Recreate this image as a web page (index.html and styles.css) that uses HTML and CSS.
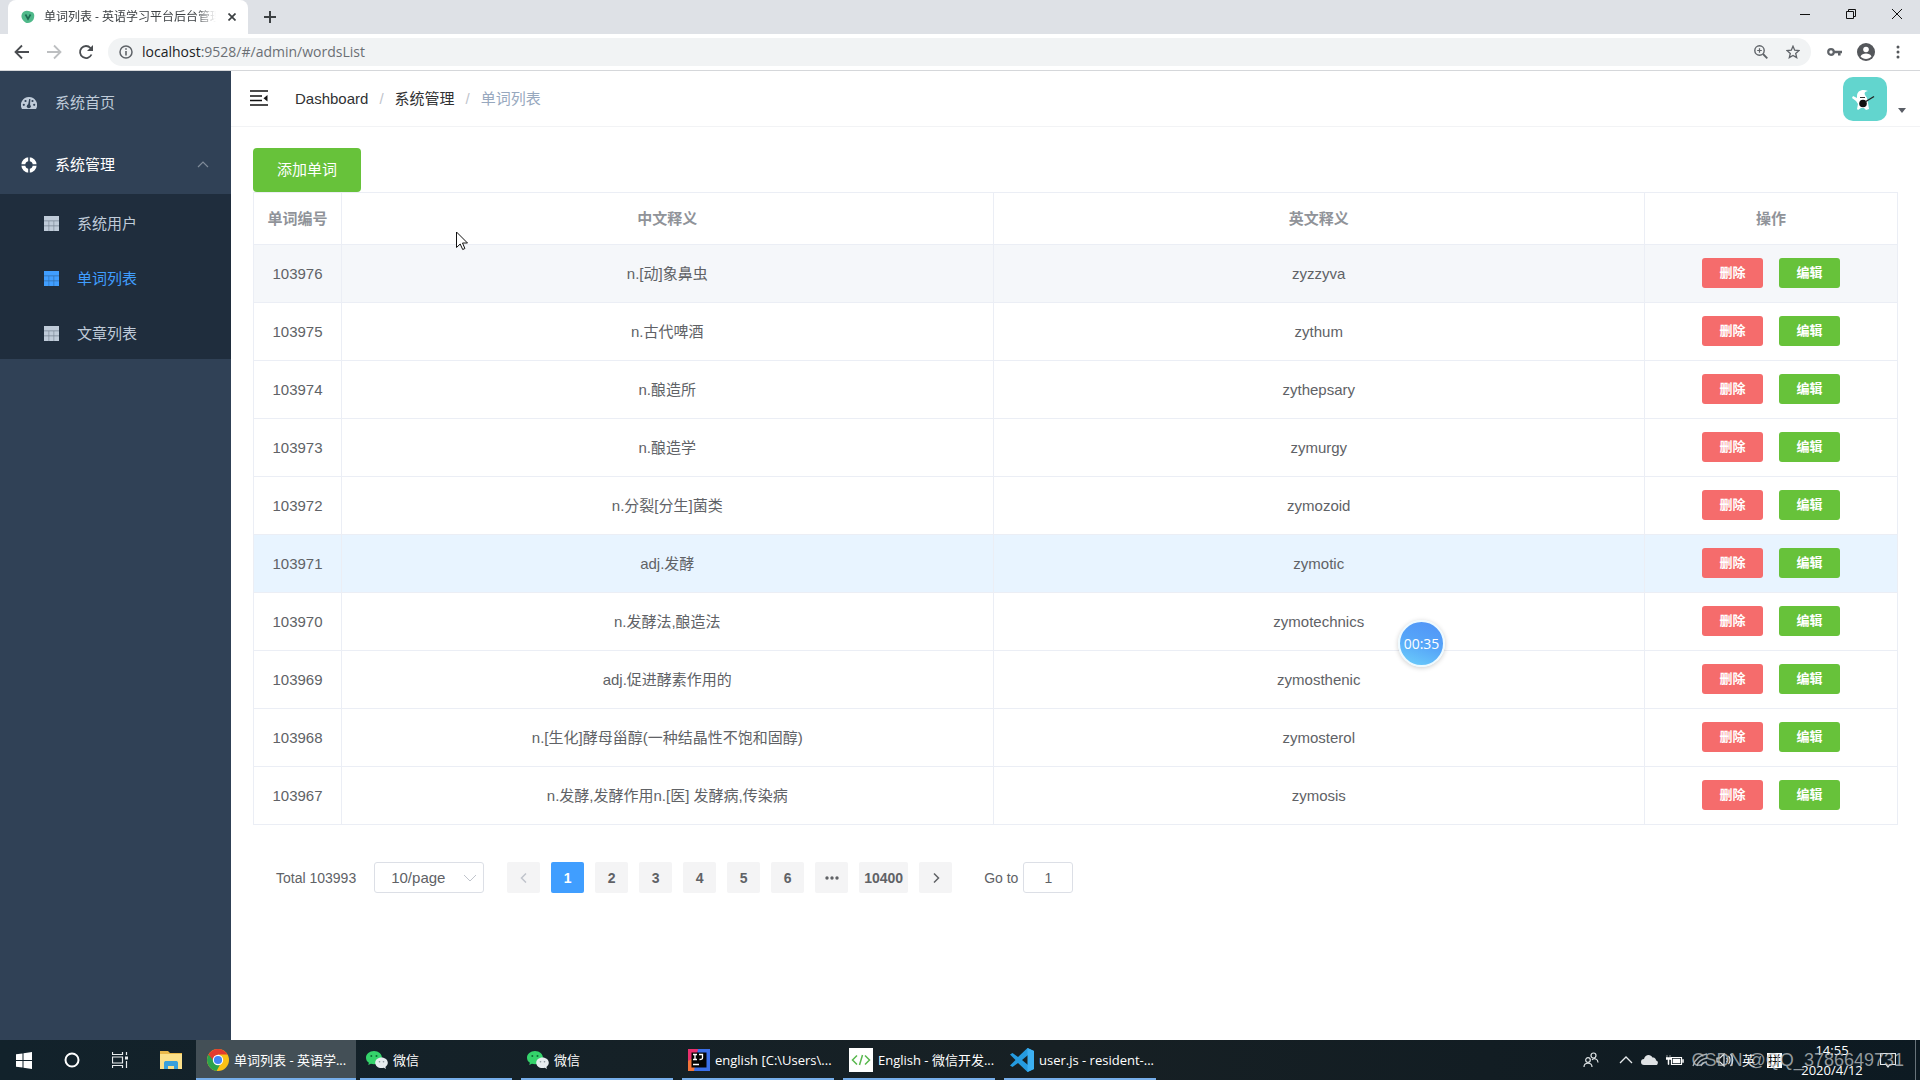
FILE: index.html
```html
<!DOCTYPE html>
<html lang="zh-CN">
<head>
<meta charset="utf-8">
<title>单词列表 - 英语学习平台后台管理</title>
<link rel="stylesheet" href="styles.css">
</head>
<body>
<svg class="defs" aria-hidden="true">
  <symbol id="grid" viewBox="0 0 15 15"><path d="M0 0h15v15H0z" fill="currentColor" opacity=".55"/><path d="M0 0h15v4.600H0zM0 5.200h4.600v4.400H0zM5.200 5.200h4.400v4.400H5.200zM10.200 5.200H15v4.400h-4.800zM0 10.200h4.600V15H0zM5.200 10.200h4.400V15H5.200zM10.200 10.200H15V15h-4.800z" fill="currentColor"/></symbol>
  <symbol id="wechat" viewBox="0 0 22 20"><path d="M8 1C3.500 1 0 4 0 7.700c0 2.100 1.100 3.900 2.900 5.100L2.200 15l2.700-1.300c1 .3 2 .5 3.100.5 4.500 0 8-2.900 8-6.500S12.500 1 8 1z" fill="#35d36b"/><circle cx="5.300" cy="6" r="1" fill="#0f6b35"/><circle cx="10.500" cy="6" r="1" fill="#0f6b35"/><path d="M15.500 7.500c-3.600 0-6.300 2.400-6.300 5.300s2.700 5.300 6.300 5.300c.8 0 1.600-.1 2.300-.4l2.200 1.200-.6-2c1.500-1 2.400-2.400 2.400-4.100 0-2.900-2.700-5.300-6.300-5.300z" fill="#e6ecef"/><circle cx="13.500" cy="11.700" r=".8" fill="#87939a"/><circle cx="17.500" cy="11.700" r=".8" fill="#87939a"/></symbol>
</svg>

<header class="browser">
  <div class="tabs">
    <div class="tab">
      <svg width="14" height="14" viewBox="0 0 14 14"><path d="M3 1.500c3-2 6 0 8 .5 3 1 2.500 5 1.500 7.500S7 14 4.500 12.500 0 8 .5 5.500 1.500 2.500 3 1.500z" fill="#4fb98a"/><path d="M4.500 4.500L7 9l2.500-4.500" fill="none" stroke="#1c6b52" stroke-width="1.600"/></svg>
      <span class="tab-title">单词列表 - 英语学习平台后台管理</span>
      <button class="plain" aria-label="关闭标签页"><svg width="8" height="8" viewBox="0 0 8 8"><path d="M.5.5l7 7M7.500.5l-7 7" stroke="#3c4043" stroke-width="1.700"/></svg></button>
    </div>
    <button class="plain new-tab" aria-label="新标签页"><svg width="12" height="12" viewBox="0 0 12 12"><path d="M6 0v12M0 6h12" stroke="#3c4043" stroke-width="2"/></svg></button>
    <div class="window-controls">
      <button class="plain" aria-label="最小化"><svg width="10" height="10" viewBox="0 0 10 10"><path d="M0 5.500h10" stroke="#111"/></svg></button>
      <button class="plain" aria-label="还原"><svg width="10" height="10" viewBox="0 0 10 10"><path d="M.5 2.500h7v7h-7zM2.500 2.500v-2h7v7h-2" fill="none" stroke="#111"/></svg></button>
      <button class="plain" aria-label="关闭"><svg width="10" height="10" viewBox="0 0 10 10"><path d="M0 0l10 10M10 0L0 10" stroke="#111"/></svg></button>
    </div>
  </div>
  <div class="toolbar">
    <button class="plain" aria-label="后退"><svg width="16" height="16" viewBox="0 0 16 16"><path d="M15 8H2M8 1.500L1.500 8 8 14.500" fill="none" stroke="#4a4d51" stroke-width="1.800"/></svg></button>
    <button class="plain" aria-label="前进"><svg width="16" height="16" viewBox="0 0 16 16"><path d="M1 8h13M8 1.500L14.500 8 8 14.500" fill="none" stroke="#bdbfc1" stroke-width="1.800"/></svg></button>
    <button class="plain" aria-label="刷新"><svg width="16" height="16" viewBox="0 0 16 16"><path d="M13.500 10.500A6 6 0 1 1 12.500 4L14 5.500" fill="none" stroke="#4a4d51" stroke-width="1.800"/><path d="M15 1v6H9z" fill="#4a4d51"/></svg></button>
    <div class="address">
      <svg width="14" height="14" viewBox="0 0 14 14"><circle cx="7" cy="7" r="6" fill="none" stroke="#5f6368" stroke-width="1.500"/><path d="M7 6v4.500M7 3.200v1.600" stroke="#5f6368" stroke-width="1.600"/></svg>
      <span class="url"><b>localhost</b>:9528/#/admin/wordsList</span>
      <button class="plain" aria-label="缩放"><svg width="14" height="14" viewBox="0 0 14 14"><circle cx="5.500" cy="5.500" r="4.700" fill="none" stroke="#5f6368" stroke-width="1.400"/><path d="M5.500 3.200v4.600M3.200 5.500h4.600" stroke="#5f6368" stroke-width="1.200"/><path d="M9 9l4.300 4.300" stroke="#5f6368" stroke-width="1.800"/></svg></button>
      <button class="plain" aria-label="收藏"><svg width="14" height="14" viewBox="0 0 14 14"><path d="M7 1.200l1.700 4 4.300.4-3.300 2.800 1 4.200L7 10.400l-3.700 2.200 1-4.200L1 5.600l4.300-.4z" fill="none" stroke="#5f6368" stroke-width="1.300"/></svg></button>
    </div>
    <button class="plain" aria-label="密码"><svg width="15" height="10" viewBox="0 0 15 10"><circle cx="4" cy="5" r="2.800" fill="none" stroke="#5f6368" stroke-width="2.200"/><path d="M7 5h8M12.300 5v3.500" stroke="#5f6368" stroke-width="2.600"/></svg></button>
    <button class="plain" aria-label="用户"><svg width="18" height="18" viewBox="0 0 18 18"><circle cx="9" cy="9" r="9" fill="#54575b"/><circle cx="9" cy="6.500" r="2.800" fill="#fff"/><path d="M3.500 13.500c1-2.300 3-3 5.500-3s4.500.7 5.500 3c-1.400 1.600-3.300 2.400-5.500 2.400s-4.100-.8-5.500-2.400z" fill="#fff"/></svg></button>
    <button class="plain" aria-label="菜单"><svg width="14" height="14" viewBox="0 0 14 14" fill="#54575b"><circle cx="7" cy="2" r="1.500"/><circle cx="7" cy="7" r="1.500"/><circle cx="7" cy="12" r="1.500"/></svg></button>
  </div>
</header>

<div class="app">
  <nav class="sidebar">
    <a class="item" href="#/dashboard"><svg width="16" height="16" viewBox="0 0 16 16"><path d="M8 2a8 8 0 0 0-7 12h14A8 8 0 0 0 8 2z" fill="#bfcbd9"/><g fill="#304156"><circle cx="2.800" cy="9.800" r="1.100"/><circle cx="4.500" cy="6" r="1.100"/><circle cx="11.500" cy="6" r="1.100"/><circle cx="13.200" cy="9.800" r="1.100"/><circle cx="7.800" cy="11.300" r="2"/><path d="M7 10.500L8.200 4h1.200l-.5 7z"/></g></svg>系统首页</a>
    <a class="item open" href="#/admin"><svg width="16" height="16" viewBox="0 0 16 16"><circle cx="8" cy="8" r="5.700" fill="none" stroke="#fff" stroke-width="4"/><path d="M8 0v5M8 11v5M0 8h5M11 8h5" stroke="#304156" stroke-width="1.600"/></svg>系统管理<svg class="arrow" width="12" height="12" viewBox="0 0 12 12"><path d="M1 8l5-5 5 5" fill="none" stroke="#7f8b99" stroke-width="1.200"/></svg></a>
    <div class="submenu">
      <a class="item" href="#/admin/users"><svg width="15" height="15"><use href="#grid"/></svg>系统用户</a>
      <a class="item active" href="#/admin/wordsList"><svg width="15" height="15"><use href="#grid"/></svg>单词列表</a>
      <a class="item" href="#/admin/articles"><svg width="15" height="15"><use href="#grid"/></svg>文章列表</a>
    </div>
  </nav>

  <div class="page">
    <div class="navbar">
      <button class="plain" aria-label="收起菜单"><svg width="18" height="18" viewBox="0 0 18 18"><path d="M0 1h18M0 6h12M0 10.500h12M0 15h18" stroke="#111" stroke-width="1.600"/><path d="M17.500 5v6.500l-4-3.200z" fill="#111"/></svg></button>
      <div class="breadcrumb"><a href="#/">Dashboard</a><i>/</i><a href="#/admin">系统管理</a><i>/</i><span>单词列表</span></div>
      <button class="plain profile" aria-label="账户">
        <svg width="44" height="44" viewBox="0 0 44 44"><rect width="44" height="44" rx="10" fill="#62d5ce"/><path d="M14 19c0-5 5-7.500 11-5-3 .3-4 2-3 4l2 3 1 5 1 6-3 1-2-2h-3l-3 2-1-1 1-5-2-3-4-3 1-2 4 2z" fill="#fff"/><path d="M17 20.500h5" stroke="#333"/><circle cx="20" cy="26.500" r="3.800" fill="#111"/><path d="M22 25l9-5.500" stroke="#222" stroke-width="1.400"/></svg>
        <svg class="caret" width="8" height="5" viewBox="0 0 8 5"><path d="M0 0h8L4 5z" fill="#5a5e66"/></svg>
      </button>
    </div>

    <main class="content">
      <button class="add">添加单词</button>
      <table class="words">
        <colgroup><col class="c-id"><col><col><col class="c-op"></colgroup>
        <thead><tr><th>单词编号</th><th>中文释义</th><th>英文释义</th><th>操作</th></tr></thead>
        <tbody>
          <tr class="hover"><td>103976</td><td>n.[动]象鼻虫</td><td>zyzzyva</td><td><button class="del">删除</button><button class="edit">编辑</button></td></tr>
          <tr><td>103975</td><td>n.古代啤酒</td><td>zythum</td><td><button class="del">删除</button><button class="edit">编辑</button></td></tr>
          <tr><td>103974</td><td>n.酿造所</td><td>zythepsary</td><td><button class="del">删除</button><button class="edit">编辑</button></td></tr>
          <tr><td>103973</td><td>n.酿造学</td><td>zymurgy</td><td><button class="del">删除</button><button class="edit">编辑</button></td></tr>
          <tr><td>103972</td><td>n.分裂[分生]菌类</td><td>zymozoid</td><td><button class="del">删除</button><button class="edit">编辑</button></td></tr>
          <tr class="current"><td>103971</td><td>adj.发酵</td><td>zymotic</td><td><button class="del">删除</button><button class="edit">编辑</button></td></tr>
          <tr><td>103970</td><td>n.发酵法,酿造法</td><td>zymotechnics</td><td><button class="del">删除</button><button class="edit">编辑</button></td></tr>
          <tr><td>103969</td><td>adj.促进酵素作用的</td><td>zymosthenic</td><td><button class="del">删除</button><button class="edit">编辑</button></td></tr>
          <tr><td>103968</td><td>n.[生化]酵母甾醇(一种结晶性不饱和固醇)</td><td>zymosterol</td><td><button class="del">删除</button><button class="edit">编辑</button></td></tr>
          <tr><td>103967</td><td>n.发酵,发酵作用n.[医] 发酵病,传染病</td><td>zymosis</td><td><button class="del">删除</button><button class="edit">编辑</button></td></tr>
        </tbody>
      </table>
      <div class="pagination">
        <span class="total">Total 103993</span>
        <select class="size" aria-label="每页条数"><option>10/page</option></select>
        <div class="pager">
          <button disabled aria-label="上一页"><svg width="8" height="10" viewBox="0 0 8 10"><path d="M6 .5L1.500 5 6 9.500" fill="none" stroke="#c0c4cc" stroke-width="1.500"/></svg></button>
          <button class="on">1</button><button>2</button><button>3</button><button>4</button><button>5</button><button>6</button>
          <button aria-label="更多"><svg width="14" height="4" viewBox="0 0 14 4" fill="#606266"><circle cx="2" cy="2" r="1.700"/><circle cx="7" cy="2" r="1.700"/><circle cx="12" cy="2" r="1.700"/></svg></button>
          <button>10400</button>
          <button aria-label="下一页"><svg width="8" height="10" viewBox="0 0 8 10"><path d="M2 .5L6.500 5 2 9.500" fill="none" stroke="#606266" stroke-width="1.500"/></svg></button>
        </div>
        <label class="jump">Go to<input type="text" value="1"></label>
      </div>
    </main>
  </div>
</div>

<footer class="taskbar">
  <button class="sys" aria-label="开始"><svg width="16" height="17" viewBox="0 0 16 17"><path d="M0 2.300l6.500-.9V8H0zM7.500 1.200L16 0v8H7.500zM0 9h6.500v6.600L0 14.700zM7.500 9H16v8l-8.500-1.200z" fill="#fff"/></svg></button>
  <button class="sys" aria-label="搜索"><svg width="16" height="16" viewBox="0 0 16 16"><circle cx="8" cy="8" r="6.500" fill="none" stroke="#fff" stroke-width="2"/></svg></button>
  <button class="sys" aria-label="任务视图"><svg width="16" height="16" viewBox="0 0 16 16"><path d="M.5 0v2.500h10V0M.5 16v-2.500h10V16M.5 5h10v6H.5zM14.500 0v3M14.500 9v7" fill="none" stroke="#e8ecee" stroke-width="1.200"/><path d="M13 4.500h3v3h-3z" fill="#e8ecee"/></svg></button>
  <button class="sys wide" aria-label="文件资源管理器"><svg width="22" height="20" viewBox="0 0 22 20"><path d="M0 1h8l2 2h12v16H0z" fill="#e9b84a"/><path d="M0 4h22v15H0z" fill="#fbe08a"/><path d="M4 19v-6c0-1.500 1-2 2-2h10c1 0 2 .5 2 2v6h-4v-3H8v3z" fill="#39a0dc"/></svg></button>
  <button class="task focused"><svg width="22" height="22" viewBox="0 0 22 22"><circle cx="11" cy="11" r="11" fill="#fbc116"/><path d="M11 11L1.500 5.500A11 11 0 0 0 9.500 21.900L14.500 13z" fill="#2ba24c"/><path d="M11 11H6L1.500 5.500a11 11 0 0 1 19 0H11z" fill="#e33b2e"/><circle cx="11" cy="11" r="5.200" fill="#fff"/><circle cx="11" cy="11" r="4.100" fill="#4285f4"/></svg><span>单词列表 - 英语学...</span></button>
  <button class="task"><svg width="22" height="20"><use href="#wechat"/></svg><span>微信</span></button>
  <button class="task"><svg width="22" height="20"><use href="#wechat"/></svg><span>微信</span></button>
  <button class="task"><svg width="22" height="22" viewBox="0 0 22 22"><path d="M0 0h12L0 14z" fill="#e8306d"/><path d="M0 12l10-6v16H0z" fill="#f3743b"/><path d="M10 0h12v22H6z" fill="#3b6fe8"/><path d="M3.500 3.500h15v15h-15z" fill="#050505"/><path d="M5 5.500h4M7 5.500v5M5 10.500h4M11 5.500h3.500v3.500c0 1-1 1.500-3 1.500M5 15.500h6" fill="none" stroke="#fff" stroke-width="1.300"/></svg><span>english [C:\Users\...</span></button>
  <button class="task"><svg width="24" height="24" viewBox="0 0 24 24"><path d="M0 0h24v24H0z" fill="#fff"/><path d="M8 7.500L3.500 12 8 16.500M16 7.500l4.500 4.500-4.500 4.500M13.500 7l-3 10" fill="none" stroke="#58b84e" stroke-width="1.500"/></svg><span>English - 微信开发...</span></button>
  <button class="task"><svg width="24" height="24" viewBox="0 0 24 24"><path d="M17.500 0L24 3v18l-6.500 3L8 15l-5.500 4L0 17.500 5.500 12 0 6.500 2.500 5 8 9zM18 7l-6 5 6 5z" fill="#259be0" fill-rule="evenodd"/><path d="M17.500 0L24 3v18l-6.500 3z" fill="#3caff2"/></svg><span>user.js - resident-...</span></button>
  <div class="tray">
    <svg width="16" height="16" viewBox="0 0 16 16" fill="none" stroke="#dfe4e6" stroke-width="1.200"><circle cx="10.500" cy="3.500" r="2.500"/><circle cx="5" cy="8" r="2.300"/><path d="M1 15c0-5 8-5 8 0M9 8c2-2.500 6-1 6 2.500"/></svg>
    <svg width="14" height="10" viewBox="0 0 14 10"><path d="M1 8l6-6 6 6" fill="none" stroke="#e6eaec" stroke-width="1.300"/></svg>
    <svg width="17" height="12" viewBox="0 0 17 12"><path d="M3 11a3 3 0 0 1 0-6c1-5 7-5 8.500-1.500 3 0 3.500 2 3.500 3 3 .5 2 4.500 0 4.500z" fill="#dfe2e4"/></svg>
    <svg width="18" height="12" viewBox="0 0 18 12"><path d="M5.500 3.500h10v7h-10z" fill="none" stroke="#fff" stroke-width="1.200"/><path d="M7 5h7v4H7zM16.500 5.500h1v3h-1zM1 1v3M4 1v3M0 3.500h5v2H3v5H2v-5H0z" fill="#fff" stroke="#fff" stroke-width=".5"/></svg>
    <svg width="16" height="14" viewBox="0 0 16 14" fill="none" stroke="#aab1b5" stroke-width="1.300"><path d="M1 13C3 6 8 2 15 1M5 13c1-4 5-7 10-8M9 13c1-2 3-4 6-4"/></svg>
    <svg width="18" height="14" viewBox="0 0 18 14" fill="none" stroke="#e6eaec" stroke-width="1.200"><path d="M1 5h3l4-4v12l-4-4H1zM10.500 5c1 1 1 3 0 4M12.500 3c2 2 2 6 0 8M14.500 1c3 3 3 9 0 12"/></svg>
    <span>英</span>
    <span class="ime">拼</span>
    <span class="clock">14:55<br>2020/4/12</span>
    <svg width="16" height="17" viewBox="0 0 16 17"><path d="M.5 1.500h15v11H10L8 15l-2-2.500H.5z" fill="none" stroke="#e6eaec" stroke-width="1.200"/></svg>
    <span class="edge"></span>
  </div>
  <span class="watermark">CSDN @QQ_3786649731</span>
</footer>

<div class="timer">00:35</div>
<svg class="cursor" width="12" height="20" viewBox="0 0 12 20"><path d="M.5 1v15.500l3.700-3.500 2.500 5.500 2.200-1L6.500 12h5z" fill="#fff" stroke="#111"/></svg>
</body>
</html>
```
FILE: styles.css
```css
* { box-sizing: border-box; }
body {
  margin: 0;
  min-height: 100vh;
  display: flex;
  flex-direction: column;
  position: relative;
  background: #fff;
  color: #606266;
  font: 15px/20px "Liberation Sans", "Noto Sans CJK SC", sans-serif;
}
a { color: inherit; text-decoration: none; }
button, input, select { font: inherit; color: inherit; }
svg { flex: none; display: block; }
.defs { position: absolute; width: 0; height: 0; }
.plain { display: flex; align-items: center; justify-content: center; padding: 0; border: 0; background: none; }

/* Browser frame */
.browser { font-family: "Open Sans", "Noto Sans CJK SC", sans-serif; border-bottom: 1px solid #d5d7da; }
.tabs { display: flex; align-items: center; height: 34px; padding-left: 8px; background: #dee1e6; }
.tab {
  display: flex;
  align-items: center;
  width: 240px;
  height: 34px;
  padding: 0 12px 0 13px;
  border-radius: 8px 8px 0 0;
  background: #fff;
}
.tab-title {
  flex: 1;
  margin: 0 12px 0 9px;
  overflow: hidden;
  white-space: nowrap;
  font-size: 12px;
  color: #3c4043;
  -webkit-mask-image: linear-gradient(90deg, #000 88%, transparent);
  mask-image: linear-gradient(90deg, #000 88%, transparent);
}
.new-tab { margin-left: 16px; }
.window-controls { display: flex; margin-left: auto; height: 28px; align-self: flex-start; }
.window-controls button { width: 46px; }
.toolbar { display: flex; align-items: center; gap: 16px; height: 36px; padding: 0 14px; }
.toolbar > .plain { width: 16px; }
.address {
  flex: 1;
  display: flex;
  align-items: center;
  gap: 18px;
  height: 28px;
  margin: 0 -1px 0 -2px;
  padding: 0 11px;
  border-radius: 14px;
  background: #f1f3f4;
}
.url { flex: 1; margin-left: -9px; font-size: 14px; color: #6b6f74; }
.url b { font-weight: 400; color: #202124; }

/* Sidebar */
.app { flex: 1; display: flex; }
.sidebar { width: 231px; flex: none; background: #304156; color: #bfcbd9; }
.item { display: flex; align-items: center; gap: 18px; height: 61px; padding: 3px 22px 0 21px; }
.sidebar .open { height: 62px; color: #fff; }
.arrow { margin-left: auto; }
.submenu { background: #1f2d3d; }
.submenu .item { height: 55px; padding: 4px 20px 0 44px; }
.submenu .active { color: #409eff; }

/* Top bar */
.page { flex: 1; min-width: 0; }
.navbar {
  display: flex;
  align-items: center;
  height: 56px;
  padding: 0 14px 0 19px;
  border-bottom: 1px solid #f2f3f5;
  color: #303133;
}
.breadcrumb { display: flex; margin-left: 27px; }
.breadcrumb i { margin: 0 11px; font-style: normal; color: #c0c4cc; }
.breadcrumb span { color: #97a8be; }
.profile { margin-left: auto; gap: 11px; align-items: flex-end; }
.caret { margin-bottom: 8px; }

/* Word table */
.content { padding: 21px 22px; }
.add { display: block; width: 108px; height: 44px; padding: 0; border: 0; border-radius: 4px; background: #67c23a; color: #fff; }
.words {
  width: 100%;
  table-layout: fixed;
  border-collapse: separate;
  border-spacing: 0;
  border: solid #ebeef5;
  border-width: 1px 0 0 1px;
  text-align: center;
}
.words th, .words td { padding: 0; border: solid #ebeef5; border-width: 0 1px 1px 0; }
.words th { height: 52px; color: #909399; }
.words td { height: 58px; }
.words td:last-child { padding-bottom: 2px; }
.c-id { width: 88px; }
.c-op { width: 253px; }
.hover td { background: #f5f7fa; }
.current td { background: #e8f4ff; }
.words button {
  width: 61px;
  height: 30px;
  margin: 0 8px;
  padding: 0;
  border: 0;
  border-radius: 3px;
  color: #fff;
  font-size: 13px;
  font-weight: 700;
  vertical-align: middle;
}
.words .del { background: #f56c6c; }
.words .edit { background: #67c23a; }

/* Pagination */
.pagination { display: flex; align-items: center; margin-top: 37px; padding-left: 23px; font-size: 14px; }
.size {
  width: 110px;
  height: 31px;
  margin: 0 23px 0 18px;
  padding: 0 16px;
  appearance: none;
  border: 1px solid #dcdfe6;
  border-radius: 3px;
  background: #fff url("data:image/svg+xml,%3Csvg xmlns='http://www.w3.org/2000/svg' width='12' height='8'%3E%3Cpath d='M0 1l6 6 6-6' fill='none' stroke='%23c0c4cc'/%3E%3C/svg%3E") no-repeat right 7px center;
  font-size: 15px;
}
.pager { display: flex; gap: 11px; }
.pager button {
  display: flex;
  align-items: center;
  justify-content: center;
  min-width: 33px;
  height: 31px;
  padding: 0 5px;
  border: 0;
  border-radius: 2px;
  background: #f4f4f5;
  font-weight: 700;
}
.pager .on { background: #409eff; color: #fff; }
.jump { display: flex; align-items: center; gap: 5px; margin-left: 32px; }
.jump input { width: 50px; height: 31px; padding: 0; border: 1px solid #dcdfe6; border-radius: 3px; text-align: center; }

/* Desktop taskbar */
.taskbar {
  position: relative;
  display: flex;
  height: 40px;
  background: #10202a linear-gradient(90deg, #12222b, #172024 55%, #0d1a22);
  color: #fff;
  font: 13px/20px "Open Sans", "Noto Sans CJK SC", sans-serif;
}
.taskbar button { display: flex; align-items: center; border: 0; background: none; }
.taskbar .sys { justify-content: center; width: 48px; padding: 0; }
.taskbar .wide { width: 52px; padding-left: 2px; }
.taskbar .task {
  position: relative;
  width: 161px;
  gap: 5px;
  padding: 0 4px 0 10px;
  white-space: nowrap;
}
.task::after { content: ""; position: absolute; left: 4px; right: 5px; bottom: 0; height: 2px; background: #76aeea; }
.taskbar .focused { width: 160px; padding-left: 11px; background: #434f56; }
.focused::after { left: 0; right: 0; }
.tray { display: flex; align-items: center; gap: 8px; margin-left: auto; padding-right: 4px; }
.tray > svg:first-child { margin-right: 12px; }
.ime { width: 15px; margin: 0 10px 0 4px; background: #fff; color: #111; line-height: 15px; text-align: center; }
.clock { width: 64px; text-align: center; line-height: 20px; margin-right: 8px; }
.edge { width: 1px; height: 40px; margin-left: 11px; background: #68737a; }
.watermark {
  position: absolute;
  right: 16px;
  top: 10px;
  font: 18px/20px "Liberation Sans", sans-serif;
  color: rgba(190, 195, 198, .75);
}

/* Floating recorder clock and pointer */
.timer {
  position: absolute;
  left: 1398px;
  top: 620px;
  width: 47px;
  height: 47px;
  border: 2px solid #eefaff;
  border-radius: 50%;
  background: linear-gradient(200deg, #5093f7, #56a5f8 50%, #6dd0fb);
  box-shadow: 0 1px 5px rgba(0, 0, 0, .2);
  color: #fff;
  font: 14px/43px "Open Sans", sans-serif;
  text-align: center;
}
.cursor { position: absolute; left: 456px; top: 231px; }
```
